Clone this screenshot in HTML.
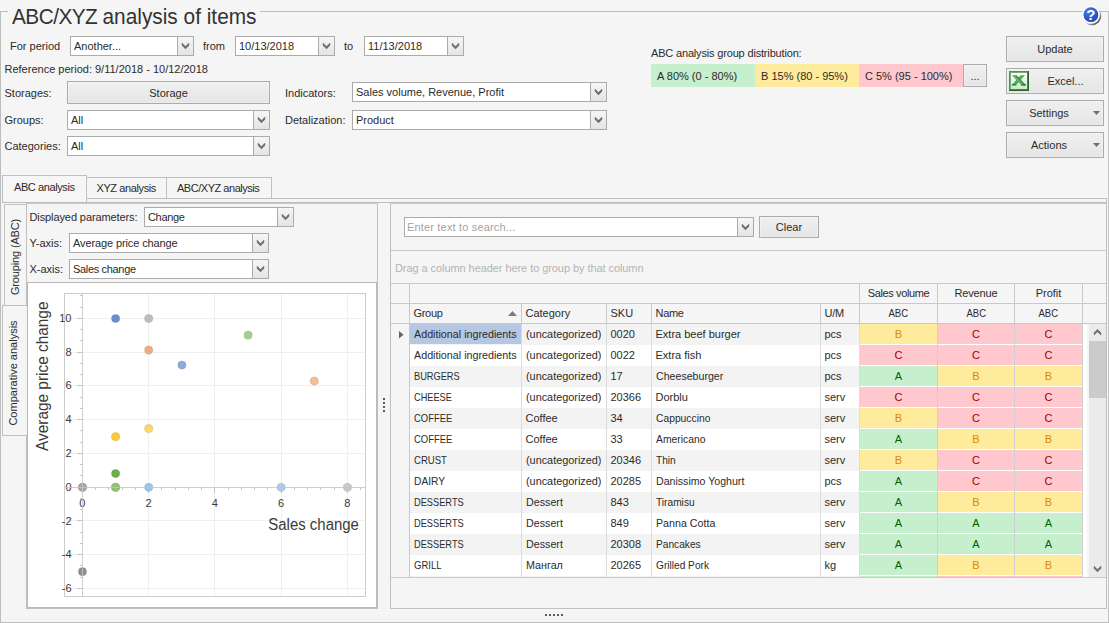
<!DOCTYPE html>
<html><head><meta charset="utf-8"><title>ABC/XYZ analysis of items</title>
<style>
html,body{margin:0;padding:0;}
body{width:1109px;height:623px;overflow:hidden;background:#f5f5f5;position:relative;
 font-family:"Liberation Sans",sans-serif;font-size:11px;color:#2b2b2b;line-height:13px;}
.a{position:absolute;box-sizing:border-box;}
.t{position:absolute;white-space:nowrap;line-height:13px;height:13px;}
.cb{position:absolute;box-sizing:border-box;border:1px solid #ababab;background:#fff;}
.cb .tx{position:absolute;left:3px;top:2px;white-space:nowrap;line-height:14px;}
.cb .dd{position:absolute;right:0;top:0;bottom:0;width:15px;border-left:1px solid #ababab;
 background:linear-gradient(#f6f6f6,#e4e4e4);}
.cb .dd svg{position:absolute;left:3px;top:6px;}
.btn{position:absolute;box-sizing:border-box;border:1px solid #ababab;
 background:linear-gradient(#f0f0f0,#e5e5e5);text-align:center;box-shadow:inset 0 0 0 1px rgba(255,255,255,.3);}
.btn span{position:absolute;left:0;right:0;white-space:nowrap;line-height:13px;}
.ln{position:absolute;background:#c0c0c0;}
</style></head><body>
<div class="ln" style="left:0px;top:11px;width:8px;height:1px;background:#bdbdbd;"></div>
<div class="ln" style="left:260px;top:11px;width:849px;height:1px;background:#bdbdbd;"></div>
<div class="ln" style="left:0px;top:11px;width:1px;height:612px;background:#bdbdbd;"></div>
<div class="ln" style="left:1108px;top:11px;width:1px;height:612px;background:#c4c4c4;"></div>
<div class="ln" style="left:0px;top:622px;width:1109px;height:1px;background:#bdbdbd;"></div>
<div class="t" style="left:11.5px;top:4px;font-size:22.5px;transform:scaleX(0.926);transform-origin:0 0;line-height:26px;height:26px;color:#333;"><span style="letter-spacing:-0.6px;">ABC/XYZ </span>analysis of items</div>
<svg class="a" style="left:1080px;top:4px;" width="24" height="24" viewBox="0 0 24 24">
<defs><radialGradient id="hg" cx="38%" cy="28%" r="80%"><stop offset="0" stop-color="#4a7be8"/><stop offset="1" stop-color="#1c43b0"/></radialGradient>
<linearGradient id="hs" x1="0" y1="0" x2="1" y2="1"><stop offset="0.4" stop-color="#9a9a9a" stop-opacity="0"/><stop offset="0.85" stop-color="#404040" stop-opacity=".95"/></linearGradient></defs>
<circle cx="11.8" cy="11.7" r="9.5" fill="url(#hs)"/>
<circle cx="10.9" cy="10.7" r="9.1" fill="#fcfdff"/>
<circle cx="10.9" cy="10.7" r="7.4" fill="url(#hg)"/>
<text x="10.9" y="16" text-anchor="middle" font-family="Liberation Sans, sans-serif" font-weight="bold" font-size="15" fill="#fff">?</text>
</svg>
<div class="t" style="left:10px;top:40px;">For period</div>
<div class="cb" style="left:70px;top:36px;width:124px;height:20px;"><span class="tx" style="">Another...</span><span class="dd"><svg width="9" height="7" viewBox="0 0 9 7"><path d="M0.8 0 L1.3 0 L4.5 3.2 L7.7 0 L8.2 0 L8.2 2.5 L4.5 6.3 L0.8 2.5 Z" fill="#707070"/></svg></span></div>
<div class="t" style="left:203px;top:40px;">from</div>
<div class="cb" style="left:235px;top:36px;width:100px;height:20px;"><span class="tx" style="">10/13/2018</span><span class="dd"><svg width="9" height="7" viewBox="0 0 9 7"><path d="M0.8 0 L1.3 0 L4.5 3.2 L7.7 0 L8.2 0 L8.2 2.5 L4.5 6.3 L0.8 2.5 Z" fill="#707070"/></svg></span></div>
<div class="t" style="left:344px;top:40px;">to</div>
<div class="cb" style="left:364px;top:36px;width:100px;height:20px;"><span class="tx" style="">11/13/2018</span><span class="dd"><svg width="9" height="7" viewBox="0 0 9 7"><path d="M0.8 0 L1.3 0 L4.5 3.2 L7.7 0 L8.2 0 L8.2 2.5 L4.5 6.3 L0.8 2.5 Z" fill="#707070"/></svg></span></div>
<div class="t" style="left:4.5px;top:63px;">Reference period: 9/11/2018 - 10/12/2018</div>
<div class="t" style="left:4.5px;top:87px;">Storages:</div>
<div class="btn" style="left:67px;top:81px;width:203px;height:23px;"><span style="top:5px;margin-left:0px;">Storage</span></div>
<div class="t" style="left:4.5px;top:114px;">Groups:</div>
<div class="cb" style="left:67px;top:110px;width:203px;height:20px;"><span class="tx" style="">All</span><span class="dd"><svg width="9" height="7" viewBox="0 0 9 7"><path d="M0.8 0 L1.3 0 L4.5 3.2 L7.7 0 L8.2 0 L8.2 2.5 L4.5 6.3 L0.8 2.5 Z" fill="#707070"/></svg></span></div>
<div class="t" style="left:4.5px;top:140px;">Categories:</div>
<div class="cb" style="left:67px;top:136px;width:203px;height:20px;"><span class="tx" style="">All</span><span class="dd"><svg width="9" height="7" viewBox="0 0 9 7"><path d="M0.8 0 L1.3 0 L4.5 3.2 L7.7 0 L8.2 0 L8.2 2.5 L4.5 6.3 L0.8 2.5 Z" fill="#707070"/></svg></span></div>
<div class="t" style="left:285px;top:87px;">Indicators:</div>
<div class="cb" style="left:352px;top:82px;width:255px;height:20px;"><span class="tx" style="">Sales volume, Revenue, Profit</span><span class="dd"><svg width="9" height="7" viewBox="0 0 9 7"><path d="M0.8 0 L1.3 0 L4.5 3.2 L7.7 0 L8.2 0 L8.2 2.5 L4.5 6.3 L0.8 2.5 Z" fill="#707070"/></svg></span></div>
<div class="t" style="left:285px;top:114px;">Detalization:</div>
<div class="cb" style="left:352px;top:110px;width:255px;height:20px;"><span class="tx" style="">Product</span><span class="dd"><svg width="9" height="7" viewBox="0 0 9 7"><path d="M0.8 0 L1.3 0 L4.5 3.2 L7.7 0 L8.2 0 L8.2 2.5 L4.5 6.3 L0.8 2.5 Z" fill="#707070"/></svg></span></div>
<div class="t" style="left:651px;top:47px;letter-spacing:-0.17px;">ABC analysis group distribution:</div>
<div class="a" style="left:651px;top:64px;width:104px;height:23px;background:#c6efce;"><span class="t" style="left:6px;top:6px;">A 80% (0 - 80%)</span></div>
<div class="a" style="left:755px;top:64px;width:104px;height:23px;background:#ffeb9c;"><span class="t" style="left:6px;top:6px;">B 15% (80 - 95%)</span></div>
<div class="a" style="left:859px;top:64px;width:104px;height:23px;background:#ffc7ce;"><span class="t" style="left:6px;top:6px;">C 5% (95 - 100%)</span></div>
<div class="btn" style="left:963px;top:64px;width:24px;height:23px;"><span style="top:5px;margin-left:0px;">...</span></div>
<div class="btn" style="left:1006px;top:36px;width:98px;height:26px;"><span style="top:6px;margin-left:0px;">Update</span></div>
<div class="btn" style="left:1006px;top:68px;width:98px;height:26px;"><svg class="a" style="left:2px;top:2px;" width="20" height="20" viewBox="0 0 20 20">
<defs><linearGradient id="xg" x1="0" y1="0" x2="0" y2="1"><stop offset="0" stop-color="#ffffff"/><stop offset="1" stop-color="#cfe6cf"/></linearGradient></defs>
<rect x="0" y="0" width="20" height="20" fill="#2a662a"/>
<rect x="0" y="0" width="19" height="19" fill="#4f944f"/>
<rect x="1" y="1" width="18" height="18" fill="#3f8a3f"/>
<rect x="1" y="1" width="17" height="17" fill="#74b074"/>
<rect x="2" y="2" width="16" height="16" fill="url(#xg)"/>
<path d="M11.6 4.3 L16 4.3 L7.2 14 L2.8 14 Z" fill="#4fae55"/>
<path d="M3 4.3 L7.6 4.3 L17 14 L12.2 14 Z" fill="#3c9a44"/>
<path d="M4.6 4.9 L13.8 14" stroke="#bfe3c2" stroke-width="0.7" fill="none"/>
<path d="M2.8 14 L7.4 14 M12 14.1 L17 14.1" stroke="#1d5a22" stroke-width="1"/>
</svg><span style="top:6px;margin-left:21px;">Excel...</span></div>
<div class="btn" style="left:1006px;top:100px;width:98px;height:26px;"><svg class="a" style="right:3px;top:10px;" width="7" height="4" viewBox="0 0 7 4"><path d="M0 0 L7 0 L3.5 4 Z" fill="#707070"/></svg><span style="top:6px;margin-left:-12px;">Settings</span></div>
<div class="btn" style="left:1006px;top:132px;width:98px;height:26px;"><svg class="a" style="right:3px;top:10px;" width="7" height="4" viewBox="0 0 7 4"><path d="M0 0 L7 0 L3.5 4 Z" fill="#707070"/></svg><span style="top:6px;margin-left:-12px;">Actions</span></div>
<div class="a" style="left:87px;top:177px;width:80px;height:22px;border:1px solid #c0c0c0;border-left:none;background:#f5f5f5;"></div>
<div class="t" style="left:96.5px;top:182px;letter-spacing:-0.4px;">XYZ analysis</div>
<div class="a" style="left:167px;top:177px;width:105px;height:22px;border:1px solid #c0c0c0;border-left:none;background:#f5f5f5;"></div>
<div class="t" style="left:177px;top:182px;letter-spacing:-0.47px;">ABC/XYZ analysis</div>
<div class="a" style="left:2px;top:175px;width:85px;height:28px;border:1px solid #c0c0c0;border-bottom:none;background:#f6f6f6;"></div>
<div class="t" style="left:14px;top:181px;letter-spacing:-0.4px;">ABC analysis</div>
<div class="ln" style="left:86px;top:198px;width:1021px;height:1px;background:#c0c0c0;"></div>
<div class="ln" style="left:1106px;top:198px;width:1px;height:411px;background:#c0c0c0;"></div>
<div class="ln" style="left:2px;top:202px;width:84px;height:1px;background:#c0c0c0;"></div>
<div class="ln" style="left:2px;top:202px;width:1105px;height:1px;background:#bcbcbc;"></div>
<div class="ln" style="left:26px;top:203px;width:352px;height:1px;background:#c8c8c8;"></div>
<div class="ln" style="left:390px;top:203px;width:717px;height:1px;background:#c8c8c8;"></div>
<div class="ln" style="left:4px;top:204px;width:22px;height:1px;background:#c0c0c0;"></div>
<div class="ln" style="left:4px;top:204px;width:1px;height:101px;background:#c0c0c0;"></div>
<div class="ln" style="left:2px;top:305px;width:24px;height:1px;background:#c0c0c0;"></div>
<div class="ln" style="left:2px;top:305px;width:1px;height:131px;background:#c0c0c0;"></div>
<div class="ln" style="left:2px;top:435px;width:25px;height:1px;background:#c0c0c0;"></div>
<div class="ln" style="left:26px;top:203px;width:1px;height:103px;background:#c0c0c0;"></div>
<div class="ln" style="left:26px;top:436px;width:1px;height:173px;background:#c0c0c0;"></div>
<div class="ln" style="left:377px;top:203px;width:1px;height:406px;background:#c0c0c0;"></div>
<div class="ln" style="left:26px;top:608px;width:352px;height:1px;background:#c0c0c0;"></div>
<div class="t" style="left:15px;top:257px;transform:translate(-50%,-50%) rotate(-90deg);letter-spacing:-0.15px;">Grouping (ABC)</div>
<div class="t" style="left:13px;top:372.5px;transform:translate(-50%,-50%) rotate(-90deg);">Comparative analysis</div>
<div class="t" style="left:29.5px;top:211px;letter-spacing:-0.1px;">Displayed parameters:</div>
<div class="cb" style="left:144px;top:207px;width:150px;height:20px;"><span class="tx" style="letter-spacing:-0.33px;">Change</span><span class="dd"><svg width="9" height="7" viewBox="0 0 9 7"><path d="M0.8 0 L1.3 0 L4.5 3.2 L7.7 0 L8.2 0 L8.2 2.5 L4.5 6.3 L0.8 2.5 Z" fill="#707070"/></svg></span></div>
<div class="t" style="left:29.5px;top:237px;">Y-axis:</div>
<div class="cb" style="left:69px;top:233px;width:200px;height:20px;"><span class="tx" style="letter-spacing:-0.11px;">Average price change</span><span class="dd"><svg width="9" height="7" viewBox="0 0 9 7"><path d="M0.8 0 L1.3 0 L4.5 3.2 L7.7 0 L8.2 0 L8.2 2.5 L4.5 6.3 L0.8 2.5 Z" fill="#707070"/></svg></span></div>
<div class="t" style="left:29.5px;top:263px;">X-axis:</div>
<div class="cb" style="left:69px;top:259px;width:200px;height:20px;"><span class="tx" style="letter-spacing:-0.33px;">Sales change</span><span class="dd"><svg width="9" height="7" viewBox="0 0 9 7"><path d="M0.8 0 L1.3 0 L4.5 3.2 L7.7 0 L8.2 0 L8.2 2.5 L4.5 6.3 L0.8 2.5 Z" fill="#707070"/></svg></span></div>
<svg class="a" style="left:27px;top:282px;" width="350" height="326" viewBox="27 282 350 326" font-family="Liberation Sans, sans-serif" font-size="11" fill="#3a3a3a"><rect x="27.5" y="282.5" width="349" height="325" fill="#fff" stroke="#b9b9b9"/><line x1="148.5" y1="294" x2="148.5" y2="596" stroke="#efefef"/><line x1="214.5" y1="294" x2="214.5" y2="596" stroke="#efefef"/><line x1="281.5" y1="294" x2="281.5" y2="596" stroke="#efefef"/><line x1="347.5" y1="294" x2="347.5" y2="596" stroke="#efefef"/><line x1="65" y1="318.5" x2="365" y2="318.5" stroke="#efefef"/><line x1="65" y1="352.5" x2="365" y2="352.5" stroke="#efefef"/><line x1="65" y1="385.5" x2="365" y2="385.5" stroke="#efefef"/><line x1="65" y1="419.5" x2="365" y2="419.5" stroke="#efefef"/><line x1="65" y1="453.5" x2="365" y2="453.5" stroke="#efefef"/><line x1="65" y1="520.5" x2="365" y2="520.5" stroke="#efefef"/><line x1="65" y1="554.5" x2="365" y2="554.5" stroke="#efefef"/><line x1="65" y1="588.5" x2="365" y2="588.5" stroke="#efefef"/><rect x="64.5" y="293.5" width="301" height="303" fill="none" stroke="#cdcdcd"/><line x1="69.5" y1="488" x2="69.5" y2="490" stroke="#c4c4c4"/><line x1="95.5" y1="488" x2="95.5" y2="490" stroke="#c4c4c4"/><line x1="108.5" y1="488" x2="108.5" y2="490" stroke="#c4c4c4"/><line x1="122.5" y1="488" x2="122.5" y2="490" stroke="#c4c4c4"/><line x1="135.5" y1="488" x2="135.5" y2="490" stroke="#c4c4c4"/><line x1="148.5" y1="488" x2="148.5" y2="493" stroke="#c4c4c4"/><line x1="161.5" y1="488" x2="161.5" y2="490" stroke="#c4c4c4"/><line x1="175.5" y1="488" x2="175.5" y2="490" stroke="#c4c4c4"/><line x1="188.5" y1="488" x2="188.5" y2="490" stroke="#c4c4c4"/><line x1="201.5" y1="488" x2="201.5" y2="490" stroke="#c4c4c4"/><line x1="214.5" y1="488" x2="214.5" y2="493" stroke="#c4c4c4"/><line x1="228.5" y1="488" x2="228.5" y2="490" stroke="#c4c4c4"/><line x1="241.5" y1="488" x2="241.5" y2="490" stroke="#c4c4c4"/><line x1="254.5" y1="488" x2="254.5" y2="490" stroke="#c4c4c4"/><line x1="267.5" y1="488" x2="267.5" y2="490" stroke="#c4c4c4"/><line x1="281.5" y1="488" x2="281.5" y2="493" stroke="#c4c4c4"/><line x1="294.5" y1="488" x2="294.5" y2="490" stroke="#c4c4c4"/><line x1="307.5" y1="488" x2="307.5" y2="490" stroke="#c4c4c4"/><line x1="320.5" y1="488" x2="320.5" y2="490" stroke="#c4c4c4"/><line x1="334.5" y1="488" x2="334.5" y2="490" stroke="#c4c4c4"/><line x1="347.5" y1="488" x2="347.5" y2="493" stroke="#c4c4c4"/><line x1="360.5" y1="488" x2="360.5" y2="490" stroke="#c4c4c4"/><line x1="77" y1="588.5" x2="82" y2="588.5" stroke="#c4c4c4"/><line x1="80" y1="577.5" x2="82" y2="577.5" stroke="#c4c4c4"/><line x1="80" y1="565.5" x2="82" y2="565.5" stroke="#c4c4c4"/><line x1="77" y1="554.5" x2="82" y2="554.5" stroke="#c4c4c4"/><line x1="80" y1="543.5" x2="82" y2="543.5" stroke="#c4c4c4"/><line x1="80" y1="532.5" x2="82" y2="532.5" stroke="#c4c4c4"/><line x1="77" y1="520.5" x2="82" y2="520.5" stroke="#c4c4c4"/><line x1="80" y1="509.5" x2="82" y2="509.5" stroke="#c4c4c4"/><line x1="80" y1="498.5" x2="82" y2="498.5" stroke="#c4c4c4"/><line x1="80" y1="475.5" x2="82" y2="475.5" stroke="#c4c4c4"/><line x1="80" y1="464.5" x2="82" y2="464.5" stroke="#c4c4c4"/><line x1="77" y1="453.5" x2="82" y2="453.5" stroke="#c4c4c4"/><line x1="80" y1="442.5" x2="82" y2="442.5" stroke="#c4c4c4"/><line x1="80" y1="430.5" x2="82" y2="430.5" stroke="#c4c4c4"/><line x1="77" y1="419.5" x2="82" y2="419.5" stroke="#c4c4c4"/><line x1="80" y1="408.5" x2="82" y2="408.5" stroke="#c4c4c4"/><line x1="80" y1="397.5" x2="82" y2="397.5" stroke="#c4c4c4"/><line x1="77" y1="385.5" x2="82" y2="385.5" stroke="#c4c4c4"/><line x1="80" y1="374.5" x2="82" y2="374.5" stroke="#c4c4c4"/><line x1="80" y1="363.5" x2="82" y2="363.5" stroke="#c4c4c4"/><line x1="77" y1="352.5" x2="82" y2="352.5" stroke="#c4c4c4"/><line x1="80" y1="340.5" x2="82" y2="340.5" stroke="#c4c4c4"/><line x1="80" y1="329.5" x2="82" y2="329.5" stroke="#c4c4c4"/><line x1="77" y1="318.5" x2="82" y2="318.5" stroke="#c4c4c4"/><line x1="80" y1="307.5" x2="82" y2="307.5" stroke="#c4c4c4"/><line x1="80" y1="295.5" x2="82" y2="295.5" stroke="#c4c4c4"/><text x="82.3" y="507" text-anchor="middle">0</text><text x="148.5" y="507" text-anchor="middle">2</text><text x="214.8" y="507" text-anchor="middle">4</text><text x="281.0" y="507" text-anchor="middle">6</text><text x="347.3" y="507" text-anchor="middle">8</text><text x="71.5" y="321.9" text-anchor="end">10</text><text x="71.5" y="355.7" text-anchor="end">8</text><text x="71.5" y="389.4" text-anchor="end">6</text><text x="71.5" y="423.2" text-anchor="end">4</text><text x="71.5" y="456.9" text-anchor="end">2</text><text x="71.5" y="490.7" text-anchor="end">0</text><text x="71.5" y="524.5" text-anchor="end">-2</text><text x="71.5" y="558.2" text-anchor="end">-4</text><text x="71.5" y="592.0" text-anchor="end">-6</text><text x="268.3" y="529.7" font-size="16" textLength="90.6" lengthAdjust="spacingAndGlyphs">Sales change</text><text transform="translate(47.5,451) rotate(-90)" font-size="16" textLength="149.5" lengthAdjust="spacingAndGlyphs">Average price change</text><circle cx="82.5" cy="487.3" r="4.1" fill="#f2a877" stroke="rgba(0,0,0,0.13)" stroke-width="0.8"/><circle cx="82.5" cy="487.3" r="4.1" fill="#a8a8a8" stroke="rgba(0,0,0,0.13)" stroke-width="0.8"/><circle cx="115.6" cy="487.3" r="4.1" fill="#d8b8a8" stroke="rgba(0,0,0,0.13)" stroke-width="0.8"/><circle cx="115.6" cy="487.3" r="4.1" fill="#8fc474" stroke="rgba(0,0,0,0.13)" stroke-width="0.8"/><circle cx="115.6" cy="318.5" r="4.1" fill="#6a8dd0" stroke="rgba(0,0,0,0.13)" stroke-width="0.8"/><circle cx="148.7" cy="318.5" r="4.1" fill="#bdbdbd" stroke="rgba(0,0,0,0.13)" stroke-width="0.8"/><circle cx="148.7" cy="350.1" r="4.1" fill="#f1ab7e" stroke="rgba(0,0,0,0.13)" stroke-width="0.8"/><circle cx="181.9" cy="365.1" r="4.1" fill="#8faadc" stroke="rgba(0,0,0,0.13)" stroke-width="0.8"/><circle cx="248.1" cy="335.2" r="4.1" fill="#a5d08c" stroke="rgba(0,0,0,0.13)" stroke-width="0.8"/><circle cx="314.3" cy="381.0" r="4.1" fill="#f5bc98" stroke="rgba(0,0,0,0.13)" stroke-width="0.8"/><circle cx="115.6" cy="436.7" r="4.1" fill="#fccb36" stroke="rgba(0,0,0,0.13)" stroke-width="0.8"/><circle cx="148.7" cy="428.6" r="4.1" fill="#fdd766" stroke="rgba(0,0,0,0.13)" stroke-width="0.8"/><circle cx="115.6" cy="473.6" r="4.1" fill="#6aae48" stroke="rgba(0,0,0,0.13)" stroke-width="0.8"/><circle cx="148.7" cy="487.3" r="4.1" fill="#9dc3e6" stroke="rgba(0,0,0,0.13)" stroke-width="0.8"/><circle cx="281.2" cy="487.3" r="4.1" fill="#aecbe9" stroke="rgba(0,0,0,0.13)" stroke-width="0.8"/><circle cx="347.5" cy="487.3" r="4.1" fill="#c9c9c9" stroke="rgba(0,0,0,0.13)" stroke-width="0.8"/><circle cx="82.5" cy="571.7" r="4.1" fill="#8f8f8f" stroke="rgba(0,0,0,0.13)" stroke-width="0.8"/><line x1="65" y1="487.5" x2="365" y2="487.5" stroke="#c4c4c4" opacity="0.8"/><line x1="82.5" y1="294" x2="82.5" y2="596" stroke="#c4c4c4" opacity="0.8"/></svg>
<div class="ln" style="left:383px;top:398px;width:2px;height:2px;background:#5a5a5a;"></div>
<div class="ln" style="left:383px;top:402px;width:2px;height:2px;background:#5a5a5a;"></div>
<div class="ln" style="left:383px;top:406px;width:2px;height:2px;background:#5a5a5a;"></div>
<div class="ln" style="left:383px;top:410px;width:2px;height:2px;background:#5a5a5a;"></div>
<div class="ln" style="left:545px;top:614px;width:2px;height:2px;background:#5a5a5a;"></div>
<div class="ln" style="left:549px;top:614px;width:2px;height:2px;background:#5a5a5a;"></div>
<div class="ln" style="left:553px;top:614px;width:2px;height:2px;background:#5a5a5a;"></div>
<div class="ln" style="left:557px;top:614px;width:2px;height:2px;background:#5a5a5a;"></div>
<div class="ln" style="left:561px;top:614px;width:2px;height:2px;background:#5a5a5a;"></div>
<div class="ln" style="left:390px;top:203px;width:1px;height:406px;background:#c0c0c0;"></div>
<div class="ln" style="left:390px;top:608px;width:717px;height:1px;background:#c0c0c0;"></div>
<div class="cb" style="left:404px;top:217px;width:350px;height:20px;"><span class="tx" style="color:#a3a3a3;left:2px;letter-spacing:0.17px;">Enter text to search...</span><span class="dd"><svg width="9" height="7" viewBox="0 0 9 7"><path d="M0.8 0 L1.3 0 L4.5 3.2 L7.7 0 L8.2 0 L8.2 2.5 L4.5 6.3 L0.8 2.5 Z" fill="#707070"/></svg></span></div>
<div class="btn" style="left:759px;top:216px;width:60px;height:22px;"><span style="top:4px;margin-left:0px;">Clear</span></div>
<div class="ln" style="left:391px;top:250px;width:715px;height:1px;background:#c8c8c8;"></div>
<div class="t" style="left:395px;top:262px;color:#b4b4b4;letter-spacing:-0.07px;">Drag a column header here to group by that column</div>
<div class="ln" style="left:391px;top:283px;width:715px;height:1px;background:#c9c9c9;"></div>
<div class="ln" style="left:391px;top:303px;width:715px;height:1px;background:#c9c9c9;"></div>
<div class="ln" style="left:391px;top:323px;width:715px;height:1px;background:#c9c9c9;"></div>
<div class="ln" style="left:391px;top:577px;width:715px;height:1px;background:#c9c9c9;"></div>
<div class="ln" style="left:409px;top:284px;width:1px;height:293px;background:#c9c9c9;"></div>
<div class="ln" style="left:521px;top:304px;width:1px;height:19px;background:#c9c9c9;"></div>
<div class="ln" style="left:606px;top:304px;width:1px;height:19px;background:#c9c9c9;"></div>
<div class="ln" style="left:651px;top:304px;width:1px;height:19px;background:#c9c9c9;"></div>
<div class="ln" style="left:820px;top:304px;width:1px;height:19px;background:#c9c9c9;"></div>
<div class="ln" style="left:859px;top:304px;width:1px;height:19px;background:#c9c9c9;"></div>
<div class="ln" style="left:859px;top:284px;width:1px;height:39px;background:#c9c9c9;"></div>
<div class="ln" style="left:937px;top:284px;width:1px;height:39px;background:#c9c9c9;"></div>
<div class="ln" style="left:1014px;top:284px;width:1px;height:39px;background:#c9c9c9;"></div>
<div class="ln" style="left:1082px;top:284px;width:1px;height:39px;background:#c9c9c9;"></div>
<div class="t" style="left:413.5px;top:307px;letter-spacing:-0.3px;">Group</div>
<div class="t" style="left:525.5px;top:307px;">Category</div>
<div class="t" style="left:610.5px;top:307px;">SKU</div>
<div class="t" style="left:655.5px;top:307px;letter-spacing:-0.3px;">Name</div>
<div class="t" style="left:824.5px;top:307px;letter-spacing:-0.3px;">U/M</div>
<div class="t" style="left:860px;top:307px;width:77px;text-align:center;"><span style="display:inline-block;transform:scaleX(0.87);">ABC</span></div>
<div class="t" style="left:860px;top:287px;width:77px;text-align:center;letter-spacing:-0.38px;">Sales volume</div>
<div class="t" style="left:938px;top:307px;width:76px;text-align:center;"><span style="display:inline-block;transform:scaleX(0.87);">ABC</span></div>
<div class="t" style="left:938px;top:287px;width:76px;text-align:center;letter-spacing:-0.15px;">Revenue</div>
<div class="t" style="left:1015px;top:307px;width:67px;text-align:center;"><span style="display:inline-block;transform:scaleX(0.87);">ABC</span></div>
<div class="t" style="left:1015px;top:287px;width:67px;text-align:center;letter-spacing:0px;">Profit</div>
<svg class="a" style="left:508px;top:311px;" width="9" height="5" viewBox="0 0 9 5"><path d="M0 5 L4.5 0 L9 5 Z" fill="#7a7a7a"/></svg>
<div class="a" style="left:410px;top:324px;width:677px;height:253px;overflow:hidden;background:#fff;"><div class="a" style="left:0;top:0px;width:450px;height:21px;background:#f3f3f3;"></div><div class="a" style="left:0;top:0;width:111px;height:20px;background:#b5c7e3;"></div><div class="t" style="left:3.5px;top:4px;transform:scaleX(0.976);transform-origin:0 0;">Additional ingredients</div><div class="t" style="left:115.5px;top:4px;transform:scaleX(0.987);transform-origin:0 0;">(uncategorized)</div><div class="t" style="left:200.5px;top:4px;">0020</div><div class="t" style="left:245.5px;top:4px;">Extra beef burger</div><div class="t" style="left:414.5px;top:4px;">pcs</div><div class="a" style="left:450px;top:0px;width:77px;height:20px;background:#ffeb9c;color:#d98a00;text-align:center;line-height:20px;">B</div><div class="a" style="left:528px;top:0px;width:76px;height:20px;background:#ffc7ce;color:#9c0006;text-align:center;line-height:20px;">C</div><div class="a" style="left:605px;top:0px;width:67px;height:20px;background:#ffc7ce;color:#9c0006;text-align:center;line-height:20px;">C</div><div class="a" style="left:0;top:21px;width:450px;height:21px;background:#ffffff;"></div><div class="t" style="left:3.5px;top:25px;transform:scaleX(0.976);transform-origin:0 0;">Additional ingredients</div><div class="t" style="left:115.5px;top:25px;transform:scaleX(0.987);transform-origin:0 0;">(uncategorized)</div><div class="t" style="left:200.5px;top:25px;">0022</div><div class="t" style="left:245.5px;top:25px;">Extra fish</div><div class="t" style="left:414.5px;top:25px;">pcs</div><div class="a" style="left:450px;top:21px;width:77px;height:20px;background:#ffc7ce;color:#9c0006;text-align:center;line-height:20px;">C</div><div class="a" style="left:528px;top:21px;width:76px;height:20px;background:#ffc7ce;color:#9c0006;text-align:center;line-height:20px;">C</div><div class="a" style="left:605px;top:21px;width:67px;height:20px;background:#ffc7ce;color:#9c0006;text-align:center;line-height:20px;">C</div><div class="a" style="left:0;top:42px;width:450px;height:21px;background:#f3f3f3;"></div><div class="t" style="left:3.5px;top:46px;transform:scaleX(0.84);transform-origin:0 0;">BURGERS</div><div class="t" style="left:115.5px;top:46px;transform:scaleX(0.987);transform-origin:0 0;">(uncategorized)</div><div class="t" style="left:200.5px;top:46px;">17</div><div class="t" style="left:245.5px;top:46px;transform:scaleX(0.965);transform-origin:0 0;">Cheeseburger</div><div class="t" style="left:414.5px;top:46px;">pcs</div><div class="a" style="left:450px;top:42px;width:77px;height:20px;background:#c6efce;color:#006100;text-align:center;line-height:20px;">A</div><div class="a" style="left:528px;top:42px;width:76px;height:20px;background:#ffeb9c;color:#d98a00;text-align:center;line-height:20px;">B</div><div class="a" style="left:605px;top:42px;width:67px;height:20px;background:#ffeb9c;color:#d98a00;text-align:center;line-height:20px;">B</div><div class="a" style="left:0;top:63px;width:450px;height:21px;background:#ffffff;"></div><div class="t" style="left:3.5px;top:67px;transform:scaleX(0.835);transform-origin:0 0;">CHEESE</div><div class="t" style="left:115.5px;top:67px;transform:scaleX(0.987);transform-origin:0 0;">(uncategorized)</div><div class="t" style="left:200.5px;top:67px;">20366</div><div class="t" style="left:245.5px;top:67px;">Dorblu</div><div class="t" style="left:414.5px;top:67px;">serv</div><div class="a" style="left:450px;top:63px;width:77px;height:20px;background:#ffc7ce;color:#9c0006;text-align:center;line-height:20px;">C</div><div class="a" style="left:528px;top:63px;width:76px;height:20px;background:#ffc7ce;color:#9c0006;text-align:center;line-height:20px;">C</div><div class="a" style="left:605px;top:63px;width:67px;height:20px;background:#ffc7ce;color:#9c0006;text-align:center;line-height:20px;">C</div><div class="a" style="left:0;top:84px;width:450px;height:21px;background:#f3f3f3;"></div><div class="t" style="left:3.5px;top:88px;transform:scaleX(0.858);transform-origin:0 0;">COFFEE</div><div class="t" style="left:115.5px;top:88px;">Coffee</div><div class="t" style="left:200.5px;top:88px;">34</div><div class="t" style="left:245.5px;top:88px;transform:scaleX(0.936);transform-origin:0 0;">Cappuccino</div><div class="t" style="left:414.5px;top:88px;">serv</div><div class="a" style="left:450px;top:84px;width:77px;height:20px;background:#ffeb9c;color:#d98a00;text-align:center;line-height:20px;">B</div><div class="a" style="left:528px;top:84px;width:76px;height:20px;background:#ffc7ce;color:#9c0006;text-align:center;line-height:20px;">C</div><div class="a" style="left:605px;top:84px;width:67px;height:20px;background:#ffc7ce;color:#9c0006;text-align:center;line-height:20px;">C</div><div class="a" style="left:0;top:105px;width:450px;height:21px;background:#ffffff;"></div><div class="t" style="left:3.5px;top:109px;transform:scaleX(0.858);transform-origin:0 0;">COFFEE</div><div class="t" style="left:115.5px;top:109px;">Coffee</div><div class="t" style="left:200.5px;top:109px;">33</div><div class="t" style="left:245.5px;top:109px;transform:scaleX(0.939);transform-origin:0 0;">Americano</div><div class="t" style="left:414.5px;top:109px;">serv</div><div class="a" style="left:450px;top:105px;width:77px;height:20px;background:#c6efce;color:#006100;text-align:center;line-height:20px;">A</div><div class="a" style="left:528px;top:105px;width:76px;height:20px;background:#ffeb9c;color:#d98a00;text-align:center;line-height:20px;">B</div><div class="a" style="left:605px;top:105px;width:67px;height:20px;background:#ffeb9c;color:#d98a00;text-align:center;line-height:20px;">B</div><div class="a" style="left:0;top:126px;width:450px;height:21px;background:#f3f3f3;"></div><div class="t" style="left:3.5px;top:130px;transform:scaleX(0.869);transform-origin:0 0;">CRUST</div><div class="t" style="left:115.5px;top:130px;transform:scaleX(0.987);transform-origin:0 0;">(uncategorized)</div><div class="t" style="left:200.5px;top:130px;">20346</div><div class="t" style="left:245.5px;top:130px;transform:scaleX(0.92);transform-origin:0 0;">Thin</div><div class="t" style="left:414.5px;top:130px;">serv</div><div class="a" style="left:450px;top:126px;width:77px;height:20px;background:#ffeb9c;color:#d98a00;text-align:center;line-height:20px;">B</div><div class="a" style="left:528px;top:126px;width:76px;height:20px;background:#ffc7ce;color:#9c0006;text-align:center;line-height:20px;">C</div><div class="a" style="left:605px;top:126px;width:67px;height:20px;background:#ffc7ce;color:#9c0006;text-align:center;line-height:20px;">C</div><div class="a" style="left:0;top:147px;width:450px;height:21px;background:#ffffff;"></div><div class="t" style="left:3.5px;top:151px;transform:scaleX(0.93);transform-origin:0 0;">DAIRY</div><div class="t" style="left:115.5px;top:151px;transform:scaleX(0.987);transform-origin:0 0;">(uncategorized)</div><div class="t" style="left:200.5px;top:151px;">20285</div><div class="t" style="left:245.5px;top:151px;transform:scaleX(0.963);transform-origin:0 0;">Danissimo Yoghurt</div><div class="t" style="left:414.5px;top:151px;">pcs</div><div class="a" style="left:450px;top:147px;width:77px;height:20px;background:#c6efce;color:#006100;text-align:center;line-height:20px;">A</div><div class="a" style="left:528px;top:147px;width:76px;height:20px;background:#ffc7ce;color:#9c0006;text-align:center;line-height:20px;">C</div><div class="a" style="left:605px;top:147px;width:67px;height:20px;background:#ffc7ce;color:#9c0006;text-align:center;line-height:20px;">C</div><div class="a" style="left:0;top:168px;width:450px;height:21px;background:#f3f3f3;"></div><div class="t" style="left:3.5px;top:172px;transform:scaleX(0.841);transform-origin:0 0;">DESSERTS</div><div class="t" style="left:115.5px;top:172px;transform:scaleX(0.973);transform-origin:0 0;">Dessert</div><div class="t" style="left:200.5px;top:172px;">843</div><div class="t" style="left:245.5px;top:172px;transform:scaleX(0.925);transform-origin:0 0;">Tiramisu</div><div class="t" style="left:414.5px;top:172px;">serv</div><div class="a" style="left:450px;top:168px;width:77px;height:20px;background:#c6efce;color:#006100;text-align:center;line-height:20px;">A</div><div class="a" style="left:528px;top:168px;width:76px;height:20px;background:#ffeb9c;color:#d98a00;text-align:center;line-height:20px;">B</div><div class="a" style="left:605px;top:168px;width:67px;height:20px;background:#ffeb9c;color:#d98a00;text-align:center;line-height:20px;">B</div><div class="a" style="left:0;top:189px;width:450px;height:21px;background:#ffffff;"></div><div class="t" style="left:3.5px;top:193px;transform:scaleX(0.841);transform-origin:0 0;">DESSERTS</div><div class="t" style="left:115.5px;top:193px;transform:scaleX(0.973);transform-origin:0 0;">Dessert</div><div class="t" style="left:200.5px;top:193px;">849</div><div class="t" style="left:245.5px;top:193px;transform:scaleX(0.97);transform-origin:0 0;">Panna Cotta</div><div class="t" style="left:414.5px;top:193px;">serv</div><div class="a" style="left:450px;top:189px;width:77px;height:20px;background:#c6efce;color:#006100;text-align:center;line-height:20px;">A</div><div class="a" style="left:528px;top:189px;width:76px;height:20px;background:#c6efce;color:#006100;text-align:center;line-height:20px;">A</div><div class="a" style="left:605px;top:189px;width:67px;height:20px;background:#c6efce;color:#006100;text-align:center;line-height:20px;">A</div><div class="a" style="left:0;top:210px;width:450px;height:21px;background:#f3f3f3;"></div><div class="t" style="left:3.5px;top:214px;transform:scaleX(0.841);transform-origin:0 0;">DESSERTS</div><div class="t" style="left:115.5px;top:214px;transform:scaleX(0.973);transform-origin:0 0;">Dessert</div><div class="t" style="left:200.5px;top:214px;">20308</div><div class="t" style="left:245.5px;top:214px;transform:scaleX(0.925);transform-origin:0 0;">Pancakes</div><div class="t" style="left:414.5px;top:214px;">serv</div><div class="a" style="left:450px;top:210px;width:77px;height:20px;background:#c6efce;color:#006100;text-align:center;line-height:20px;">A</div><div class="a" style="left:528px;top:210px;width:76px;height:20px;background:#c6efce;color:#006100;text-align:center;line-height:20px;">A</div><div class="a" style="left:605px;top:210px;width:67px;height:20px;background:#c6efce;color:#006100;text-align:center;line-height:20px;">A</div><div class="a" style="left:0;top:231px;width:450px;height:21px;background:#ffffff;"></div><div class="t" style="left:3.5px;top:235px;transform:scaleX(0.864);transform-origin:0 0;">GRILL</div><div class="t" style="left:115.5px;top:235px;transform:scaleX(0.976);transform-origin:0 0;">Мангал</div><div class="t" style="left:200.5px;top:235px;">20265</div><div class="t" style="left:245.5px;top:235px;transform:scaleX(0.922);transform-origin:0 0;">Grilled Pork</div><div class="t" style="left:414.5px;top:235px;">kg</div><div class="a" style="left:450px;top:231px;width:77px;height:20px;background:#c6efce;color:#006100;text-align:center;line-height:20px;">A</div><div class="a" style="left:528px;top:231px;width:76px;height:20px;background:#ffeb9c;color:#d98a00;text-align:center;line-height:20px;">B</div><div class="a" style="left:605px;top:231px;width:67px;height:20px;background:#ffeb9c;color:#d98a00;text-align:center;line-height:20px;">B</div><div class="a" style="left:0;top:252px;width:450px;height:21px;background:#f3f3f3;"></div><div class="a" style="left:450px;top:252px;width:77px;height:20px;background:#c6efce;color:#006100;text-align:center;line-height:20px;"></div><div class="a" style="left:528px;top:252px;width:76px;height:20px;background:#ffc7ce;color:#9c0006;text-align:center;line-height:20px;"></div><div class="a" style="left:605px;top:252px;width:67px;height:20px;background:#ffc7ce;color:#9c0006;text-align:center;line-height:20px;"></div><div class="a" style="left:111px;top:0;width:1px;height:253px;background:#dcdcdc;"></div><div class="a" style="left:196px;top:0;width:1px;height:253px;background:#dcdcdc;"></div><div class="a" style="left:241px;top:0;width:1px;height:253px;background:#dcdcdc;"></div><div class="a" style="left:410px;top:0;width:1px;height:253px;background:#dcdcdc;"></div><div class="a" style="left:449px;top:0;width:1px;height:253px;background:#dcdcdc;"></div><div class="a" style="left:527px;top:0;width:1px;height:253px;background:#d0d0d0;"></div><div class="a" style="left:604px;top:0;width:1px;height:253px;background:#d0d0d0;"></div><div class="a" style="left:672px;top:0;width:1px;height:253px;background:#d0d0d0;"></div></div>
<svg class="a" style="left:399px;top:331px;" width="5" height="8" viewBox="0 0 5 8"><path d="M0 0 L4.5 3.75 L0 7.5 Z" fill="#646464"/></svg>
<div class="a" style="left:1089px;top:324px;width:17px;height:253px;background:#ebebeb;"></div>
<div class="a" style="left:1089px;top:341px;width:17px;height:57px;background:#cbcbcb;"></div>
<svg class="a" style="left:1093px;top:329px;" width="9" height="7" viewBox="0 0 9 7"><path d="M0.8 6.3 L1.3 6.3 L4.5 3.1 L7.7 6.3 L8.2 6.3 L8.2 3.8 L4.5 0 L0.8 3.8 Z" fill="#707070"/></svg>
<svg class="a" style="left:1093px;top:566px;" width="9" height="7" viewBox="0 0 9 7"><path d="M0.8 0 L1.3 0 L4.5 3.2 L7.7 0 L8.2 0 L8.2 2.5 L4.5 6.3 L0.8 2.5 Z" fill="#707070"/></svg>
</body></html>
